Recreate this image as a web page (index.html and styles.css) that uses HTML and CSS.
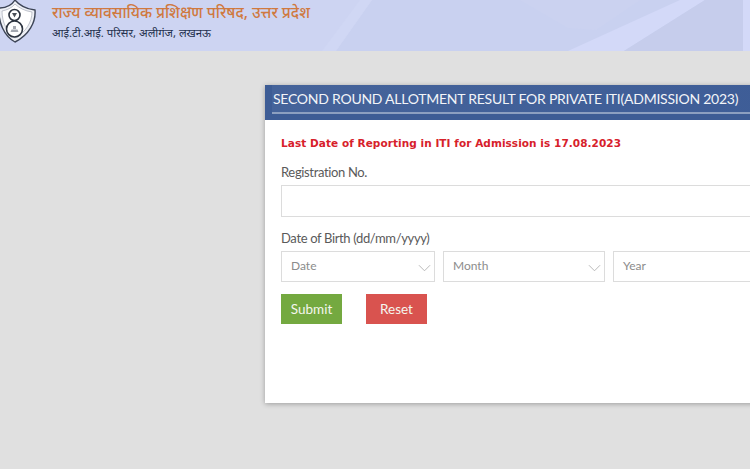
FILE: index.html
```html
<!DOCTYPE html>
<html>
<head>
    <meta charset="utf-8">
    <title>Second Round Allotment Result</title>
    <link rel="stylesheet" href="styles.css">
</head>
<body>
    <header class="site-header">
        <svg class="header-bg" viewBox="0 0 750 51" preserveAspectRatio="none" aria-hidden="true">
            <polygon points="0,0 372,0 336,51 0,51" fill="#cdd4f2"/>
            <polygon points="360,0 372,0 336,51 322,51" fill="#d0d7f4"/>
            <polygon points="409,0 640,0 596,30 568,28 520,0" fill="#cbd2f0"/>
            <polygon points="568,51 680,0 705,0 624,51" fill="#d3d9f8"/>
            <polygon points="705,0 743,0 743,51 624,51" fill="#c6cdec"/>
            <polygon points="743,0 750,0 750,51 743,51" fill="#d3d9f8"/>
        </svg>
        <svg class="crest" viewBox="0 0 36 44" aria-hidden="true">
            <path d="M-1 8 C6 8 12 5 15 0 C19 5 27 9 35 10 C36 22 29 35 15 42 C4 36 -2 22 -1 8 Z" fill="#eef0f5" stroke="#3c4456" stroke-width="1.4"/>
            <path d="M2 11 C7 10 12 8 15 4 C19 8 25 11 32 12 C32 22 26 32 15 38 C7 33 2 22 2 11 Z" fill="#fff" stroke="#9aa0ac" stroke-width="0.6"/>
            <circle cx="14.500" cy="15" r="5.500" fill="#fff" stroke="#2d3440" stroke-width="1.6"/>
            <path d="M12 13 h5 l-2.500 4.500 z" fill="#4a4f58"/>
            <circle cx="14.500" cy="29" r="8" fill="#fff" stroke="#2d3440" stroke-width="1.600"/>
            <path d="M10.500 32 h8 l-1 -2.500 h-6 z M13 29 h3 v-3 h-3 z" fill="#a4a8b0"/>
        </svg>
        <div class="org">
            <div class="org-name">राज्य व्यावसायिक प्रशिक्षण परिषद, उत्तर प्रदेश</div>
            <div class="org-address">आई.टी.आई. परिसर, अलीगंज, लखनऊ</div>
        </div>
    </header>

    <main class="page">
        <section class="card">
            <h1 class="card-title"><span>SECOND ROUND ALLOTMENT RESULT FOR PRIVATE ITI(ADMISSION 2023)</span></h1>
            <div class="card-body">
                <p class="notice">Last Date of Reporting in ITI for Admission is 17.08.2023</p>
                <label class="field-label" for="reg-no">Registration No.</label>
                <input class="text-input" type="text" id="reg-no">
                <label class="field-label dob-label">Date of Birth (dd/mm/yyyy)</label>
                <div class="dob-row">
                    <div class="select select-date">Date
                        <svg class="chevron" viewBox="0 0 14 8" aria-hidden="true"><path d="M1 1 L7 7 L13 1" fill="none" stroke="#b4b4b4" stroke-width="1"/></svg>
                    </div>
                    <div class="select select-month">Month
                        <svg class="chevron" viewBox="0 0 14 8" aria-hidden="true"><path d="M1 1 L7 7 L13 1" fill="none" stroke="#b4b4b4" stroke-width="1"/></svg>
                    </div>
                    <div class="select select-year">Year</div>
                </div>
                <div class="actions">
                    <button class="btn btn-submit" type="button">Submit</button>
                    <button class="btn btn-reset" type="button">Reset</button>
                </div>
            </div>
        </section>
    </main>
</body>
</html>
```

FILE: styles.css
```css
html, body {
    margin: 0;
    height: 100%;
    overflow: hidden;
}
body {
    background: #e0e0e0;
    font-family: Lato, "Noto Sans", sans-serif;
}
.site-header {
    position: relative;
    height: 51px;
    display: flex;
    align-items: flex-start;
    background: #c9d1f0;
}
.header-bg {
    position: absolute;
    left: 0;
    top: 0;
    width: 100%;
    height: 100%;
}
.crest {
    position: relative;
    width: 36px;
    height: 44px;
    flex-shrink: 0;
}
.org {
    position: relative;
    margin-left: 16px;
}
.org-name {
    color: #d0793f;
    font-size: 15.400px;
    font-weight: 500;
    line-height: 24px;
    font-family: "Noto Sans", "Noto Sans Devanagari", "Lohit Devanagari", sans-serif;
    margin-top: 1px;
}
.org-address {
    color: #25324f;
    font-size: 11.300px;
    line-height: 15px;
    font-family: "Noto Sans", "Noto Sans Devanagari", "Lohit Devanagari", sans-serif;
}
.page {
    padding: 34px 0 0 265px;
}
.card {
    width: 520px;
    height: 318px;
    background: #fff;
    box-shadow: 0 1px 5px rgba(0,0,0,0.3);
}
.card-title {
    margin: 0;
    height: 35px;
    background: #3d5c95;
    color: #f2f4f8;
    font-size: 14px;
    font-weight: 400;
    letter-spacing: -0.25px;
    line-height: 27px;
    white-space: nowrap;
    overflow: hidden;
}
.card-title span {
    display: block;
    height: 27px;
    margin-left: 7px;
    padding-left: 1px;
    background: linear-gradient(90deg, #45639a, #3e5d97);
    border-bottom: 2px solid #8c9fc0;
}
.card-body {
    padding: 0 0 0 16px;
}
.notice {
    margin: 0;
    padding-top: 17px;
    color: #d7212b;
    font-family: "DejaVu Sans", sans-serif;
    font-weight: bold;
    font-size: 10.500px;
    line-height: 13px;
    letter-spacing: 0.06px;
}
.field-label {
    display: block;
    color: #5a5a5a;
    font-size: 13px;
    letter-spacing: -0.35px;
    line-height: 16px;
    margin-top: 14px;
}
.text-input {
    display: block;
    width: 100%;
    height: 32px;
    box-sizing: border-box;
    margin-top: 5px;
    border: 1px solid #dcdcdc;
    background: #fff;
}
.dob-label {
    margin-top: 13px;
}
.dob-row {
    display: flex;
    gap: 8px;
    margin-top: 5px;
}
.select {
    position: relative;
    box-sizing: border-box;
    height: 31px;
    border: 1px solid #dcdcdc;
    padding-left: 9px;
    color: #8c8c8c;
    font-size: 12px;
    line-height: 27px;
    flex-shrink: 0;
}
.select-date {
    width: 154px;
}
.select-month {
    width: 162px;
}
.select-year {
    width: 200px;
}
.chevron {
    position: absolute;
    right: 3px;
    top: 12px;
    width: 13px;
    height: 8px;
}
.actions {
    display: flex;
    gap: 24px;
    margin-top: 12px;
}
.btn {
    width: 61px;
    height: 30px;
    border: none;
    padding: 0;
    color: #f4f6ee;
    font-family: Lato, sans-serif;
    font-size: 13.500px;
    cursor: pointer;
}
.btn-submit {
    background: #74a940;
}
.btn-reset {
    background: #d9534f;
}
```
